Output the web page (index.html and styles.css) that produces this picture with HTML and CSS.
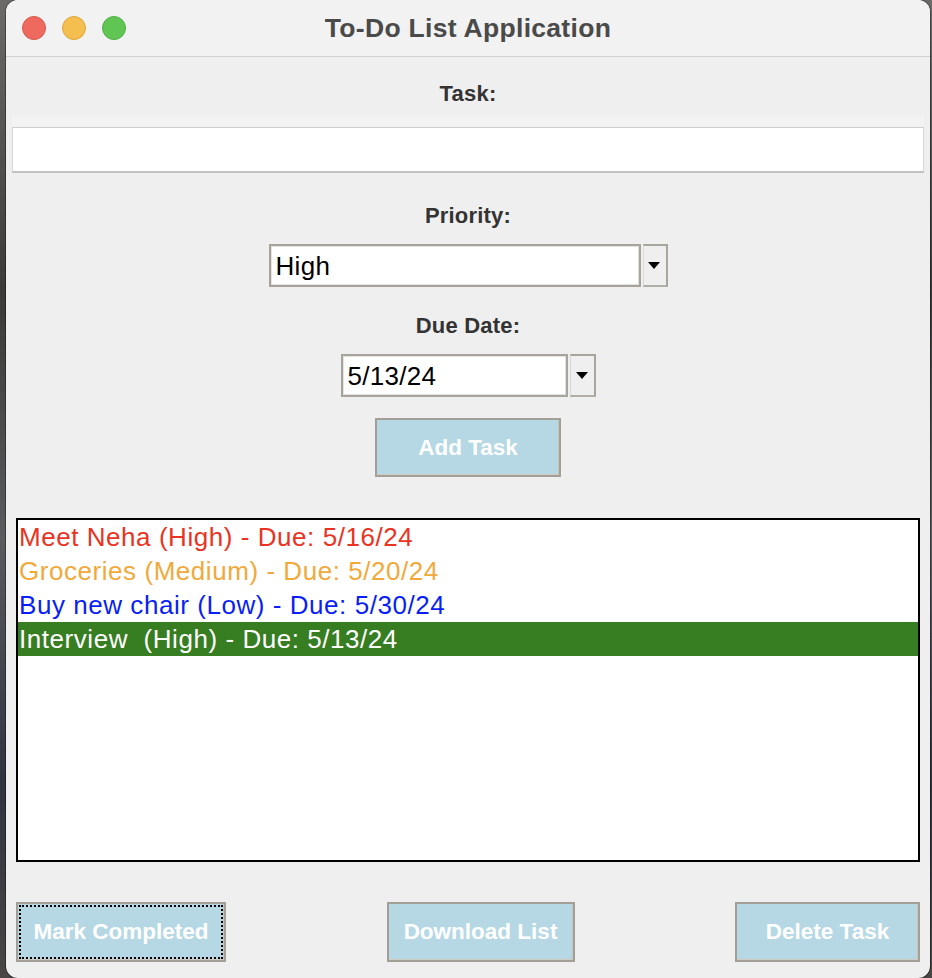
FILE: index.html
```html
<!DOCTYPE html>
<html>
<head>
<meta charset="utf-8">
<title>To-Do List Application</title>
<link rel="stylesheet" href="styles.css">
</head>
<body>
<div class="desktop">
  <div class="window">
    <div class="titlebar">
      <div class="lights">
        <span class="light red"></span>
        <span class="light yellow"></span>
        <span class="light green"></span>
      </div>
      <div class="title">To-Do List Application</div>
      <div></div>
    </div>
    <div class="content">
      <div class="label label-task">Task:</div>
      <div class="entry-wrap"><div class="entry"></div></div>
      <div class="label label-priority">Priority:</div>
      <div class="combo combo-priority">
        <div class="combo-field">High</div>
        <div class="combo-arrow"><span class="tri"></span></div>
      </div>
      <div class="label label-due">Due Date:</div>
      <div class="combo combo-date">
        <div class="combo-field">5/13/24</div>
        <div class="combo-arrow"><span class="tri"></span></div>
      </div>
      <div class="btn btn-add">Add Task</div>
      <div class="listbox">
        <div class="item item-high">Meet Neha (High) - Due: 5/16/24</div>
        <div class="item item-medium">Groceries (Medium) - Due: 5/20/24</div>
        <div class="item item-low">Buy new chair (Low) - Due: 5/30/24</div>
        <div class="item item-selected">Interview&nbsp; (High) - Due: 5/13/24</div>
      </div>
      <div class="actions">
        <div class="btn btn-mark focused">Mark Completed</div>
        <div class="btn btn-download">Download List</div>
        <div class="btn btn-delete">Delete Task</div>
      </div>
    </div>
  </div>
</div>
</body>
</html>
```

FILE: styles.css
```css
html, body {
  margin: 0;
  padding: 0;
}
body {
  width: 932px;
  height: 978px;
  overflow: hidden;
  font-family: "Liberation Sans", Arial, sans-serif;
}
.desktop {
  width: 932px;
  height: 978px;
  background: linear-gradient(180deg, #6b6a68 0%, #3b3a38 30%, #5a5b5e 55%, #2f3340 80%, #4a4645 100%);
}
.window {
  margin-left: 6px;
  width: 924px;
  height: 978px;
  background: #efefef;
  border-radius: 12px;
  overflow: hidden;
  box-shadow: 0 0 0 1px rgba(0,0,0,0.35);
}
.titlebar {
  height: 56px;
  background: #f2f2f2;
  border-bottom: 1px solid #d2d2d2;
  display: grid;
  grid-template-columns: 1fr auto 1fr;
  align-items: center;
}
.lights {
  display: flex;
  gap: 16px;
  padding-left: 16px;
}
.light {
  width: 24px;
  height: 24px;
  border-radius: 50%;
  box-sizing: border-box;
}
.red { background: #ee6a5f; border: 1px solid #d9564c; }
.yellow { background: #f5bf4f; border: 1px solid #dea63a; }
.green { background: #61c554; border: 1px solid #4eaf42; }
.title {
  font-size: 26.5px;
  font-weight: bold;
  color: #4a4a4a;
  letter-spacing: 0.3px;
}
.content {
  display: flex;
  flex-direction: column;
  align-items: center;
}
.label {
  font-size: 22px;
  font-weight: bold;
  color: #333;
  line-height: 30px;
  height: 30px;
  letter-spacing: 0.2px;
}
.label-task { margin-top: 22px; }
.label-priority { margin-top: 28px; }
.label-due { margin-top: 24px; }
.entry-wrap {
  align-self: stretch;
  padding: 0 6px;
  margin-top: 18px;
}
.entry {
  height: 46px;
  box-sizing: border-box;
  background: #fff;
  border: 1px solid #d6d6d6;
  border-top-color: #cdcdcd;
  border-bottom: 2px solid #c2c2c2;
  box-shadow: 0 -11px 0 0 #f2f2f2;
}
.combo {
  display: flex;
  gap: 2px;
  height: 43px;
  margin-top: 13px;
}
.combo-priority { width: 399px; }
.combo-date { width: 255px; }
.combo-field {
  flex: 1;
  box-sizing: border-box;
  background: #fff;
  border: 2px solid #a8a49c;
  box-shadow: inset 1px 1px 0 #e2e2e2, inset -1px -1px 0 #e2e2e2;
  font-size: 26px;
  line-height: 41px;
  padding-left: 5px;
  color: #000;
  letter-spacing: 0.3px;
}
.combo-priority .combo-arrow { width: 25px; }
.combo-date .combo-arrow { width: 26px; }
.combo-arrow {
  box-sizing: border-box;
  border: 2px solid #a8a49c;
  border-left: 1px solid #d8d8d8;
  border-bottom-color: #b2aea6;
  background: #efefef;
  display: flex;
  align-items: center;
  justify-content: center;
}
.tri {
  width: 0;
  height: 0;
  border-left: 6.5px solid transparent;
  border-right: 6.5px solid transparent;
  border-top: 7px solid #000;
  margin-left: -1px;
}
.btn {
  box-sizing: border-box;
  height: 59px;
  background: #b5d8e4;
  color: #fff;
  font-size: 22.5px;
  font-weight: bold;
  display: flex;
  align-items: center;
  justify-content: center;
  border: 2px solid #a39e96;
  box-shadow: inset 0 -1px 0 #cfcac2, inset -1px 0 0 #c9c4bc;
  position: relative;
}
.btn-add {
  width: 186px;
  margin-top: 21px;
}
.listbox {
  align-self: stretch;
  margin: 41px 10px 0;
  height: 344px;
  box-sizing: border-box;
  border: 2px solid #000;
  background: #fff;
}
.item {
  height: 34px;
  line-height: 34px;
  font-size: 26px;
  letter-spacing: 0.55px;
  padding-left: 1px;
  white-space: pre;
}
.item-high { color: #e93323; }
.item-medium { color: #f1a93b; }
.item-low { color: #0a1ff5; }
.item-selected { background: #377d22; color: #fff; }
.actions {
  align-self: stretch;
  display: flex;
  justify-content: space-between;
  padding: 0 10px;
  margin-top: 40px;
}
.actions .btn { height: 60px; }
.btn-mark { width: 210px; }
.btn-download { width: 188px; }
.btn-delete { width: 185px; }
.focused::after {
  content: "";
  position: absolute;
  left: 1px;
  top: 1px;
  right: 1px;
  bottom: 1px;
  border: 2px dotted #000;
}
```
